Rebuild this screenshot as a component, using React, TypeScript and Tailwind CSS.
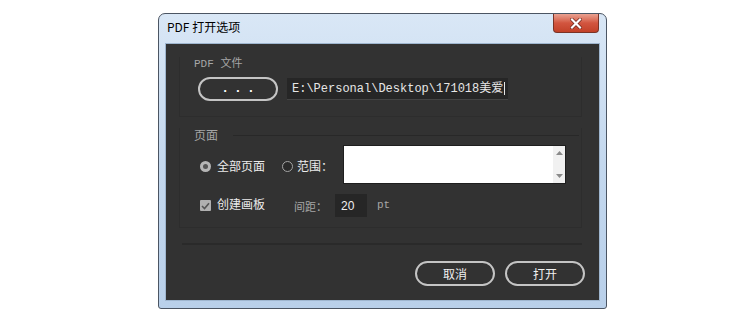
import React from "react";

const cjk = { fontFamily: '"Noto Sans CJK SC", "Liberation Sans", sans-serif' };
const mono = { fontFamily: '"Liberation Mono", "Noto Sans CJK SC", monospace' };

function Pill({ children, w, h }: { children: React.ReactNode; w: string; h: string }) {
  return (
    <div
      className={`${w} ${h} rounded-full border-[2px] border-[#c4c4c4] flex items-center justify-center text-[12px] text-[#f0f0f0]`}
      style={cjk}
    >
      {children}
    </div>
  );
}

export default function App() {
  return (
    <div className="w-[752px] h-[321px] bg-white pl-[158px] pt-[13px]">
      <div className="w-[449px] h-[296px] rounded-t-[7px] rounded-b-[3px] border border-[#4b5563] bg-gradient-to-b from-[#d9e7f6] via-[#c4d8ee] to-[#b9d0ea] flex flex-col">
        {/* title bar */}
        <div className="h-[29px] flex items-start justify-between pl-[8px] pr-[7px]">
          <div className="pt-[4px] text-[12px] text-black leading-[18px]" style={cjk}>
            PDF 打开选项
          </div>
          <div className="w-[46px] h-[19px] rounded-b-[4px] border border-t-0 border-[#7a3326] bg-gradient-to-b from-[#e9a191] via-[#d2553f] to-[#c24128] flex items-center justify-center">
            <svg width="12" height="11" viewBox="0 0 12 11">
              <path d="M2 1.5 L10 9.5 M10 1.5 L2 9.5" stroke="#6b2218" strokeWidth="3.6" strokeLinecap="square" />
              <path d="M2 1.5 L10 9.5 M10 1.5 L2 9.5" stroke="#ffffff" strokeWidth="2.2" strokeLinecap="square" />
            </svg>
          </div>
        </div>
        {/* content */}
        <div className="mx-[6px] h-[258px] border border-[#9fb6cf] bg-[#323232] flex flex-col">
          {/* group 1 */}
          <div className="ml-[13px] w-[403px] mt-[13px] h-[60px] border-x border-b border-[#2d2d2d] flex flex-col">
            <div className="ml-[14px] h-[14px] leading-[14px] text-[11px] text-[#a6a6a6]" style={mono}>
              PDF 文件
            </div>
            <div className="mt-[6px] flex items-center">
              <div className="ml-[18px]">
                <Pill w="w-[80px]" h="h-[24px]">
                  <span className="pl-[5px] text-[13px] font-bold tracking-[5px] text-white" style={mono}>...</span>
                </Pill>
              </div>
              <div
                className="ml-[9px] w-[221px] h-[22px] bg-[#262626] border-b border-[#444] flex items-center pl-[5px] text-[12px] text-[#e6e6e6] whitespace-nowrap overflow-hidden"
                style={mono}
              >
                E:\Personal\Desktop\171018美爱<span className="ml-[1px] inline-block w-[1px] h-[13px] bg-[#e6e6e6]" />
              </div>
            </div>
          </div>
          {/* group 2 */}
          <div className="ml-[13px] w-[403px] mt-[11px] h-[100px] border-x border-b border-[#2d2d2d] flex flex-col">
            <div className="flex items-center h-[14px]">
              <div className="ml-[14px] text-[12px] leading-[14px] text-[#a6a6a6]" style={cjk}>
                页面
              </div>
              <div className="ml-[15px] w-[346px] h-[1px] bg-[#282828]" />
            </div>
            <div className="mt-[3px] flex items-start">
              <div className="flex items-center mt-[13px]">
                <div className="ml-[20px] w-[11px] h-[11px] rounded-full bg-[#b5b5b5] flex items-center justify-center">
                  <div className="w-[5px] h-[5px] rounded-full bg-[#555]" />
                </div>
                <div className="ml-[6px] text-[12px] text-[#ececec] leading-[16px]" style={cjk}>
                  全部页面
                </div>
                <div className="ml-[17px] w-[11px] h-[11px] rounded-full border border-[#a5a5a5] bg-[#2a2a2a]" />
                <div className="ml-[4px] text-[12px] text-[#ececec] leading-[16px]" style={cjk}>
                  范围：
                </div>
              </div>
              <div className="ml-[10px] w-[223px] h-[39px] bg-white border border-[#1e1e1e] flex justify-end">
                <div className="w-[12px] h-full bg-[#f1f1f1] flex flex-col items-center justify-between py-[5px]">
                  <svg width="7" height="4" viewBox="0 0 7 4"><path d="M0 4 L3.5 0 L7 4 Z" fill="#8a8a8a" /></svg>
                  <svg width="7" height="4" viewBox="0 0 7 4"><path d="M0 0 L3.5 4 L7 0 Z" fill="#8a8a8a" /></svg>
                </div>
              </div>
            </div>
            <div className="mt-[10px] flex items-center">
              <div className="ml-[20px] w-[11px] h-[11px] rounded-[1px] bg-[#b0b0b0] flex items-center justify-center">
                <svg width="9" height="8" viewBox="0 0 9 8">
                  <path d="M1 4 L3.5 6.5 L8 1.2" stroke="#555" strokeWidth="1.6" fill="none" />
                </svg>
              </div>
              <div className="ml-[6px] text-[12px] text-[#ececec] leading-[16px] -mt-[3px]" style={cjk}>
                创建画板
              </div>
              <div className="ml-[29px] text-[11px] text-[#a6a6a6] leading-[16px]" style={cjk}>
                间距：
              </div>
              <div
                className="ml-[8px] w-[32px] h-[23px] bg-[#262626] flex items-center pl-[6px] text-[12px] text-[#f0f0f0]"
                style={{ fontFamily: '"Liberation Sans", sans-serif' }}
              >
                20
              </div>
              <div className="ml-[10px] text-[11px] text-[#a6a6a6]" style={mono}>
                pt
              </div>
            </div>
          </div>
          {/* separator */}
          <div className="ml-[16px] w-[400px] mt-[15px] h-[2px] bg-[#2a2a2a]" />
          {/* buttons */}
          <div className="mt-[16px] flex justify-end pr-[14px] gap-[10px]">
            <Pill w="w-[80px]" h="h-[25px]">取消</Pill>
            <Pill w="w-[80px]" h="h-[25px]">打开</Pill>
          </div>
        </div>
      </div>
    </div>
  );
}
